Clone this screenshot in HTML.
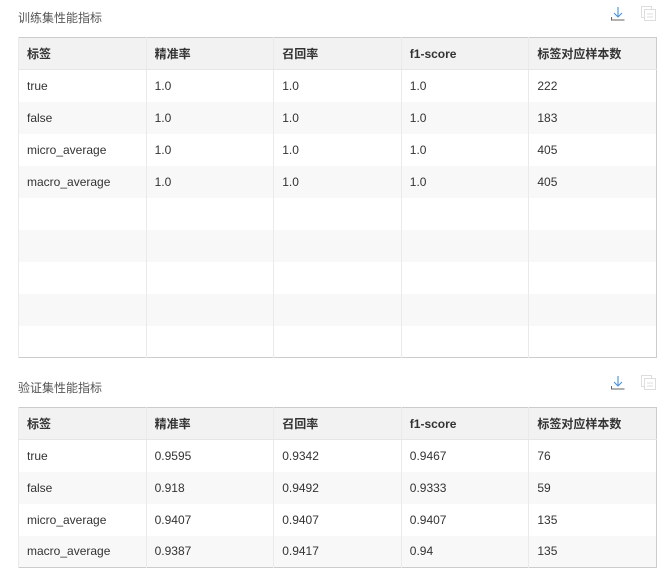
<!DOCTYPE html>
<html><head><meta charset="utf-8"><style>
*{margin:0;padding:0;box-sizing:border-box}
body{width:664px;height:536px;overflow:hidden;background:#fff;font-family:"Liberation Sans","Noto Sans CJK SC",sans-serif;font-size:12px;color:#333;position:relative}
.t{position:absolute;left:18px;font-size:12px;color:#555}
.ic{position:absolute}
table{position:absolute;left:18px;width:639px;border-collapse:collapse;border:1px solid #ccc;table-layout:fixed}
td,th{height:32px;border-left:1px solid #eaeaea;padding-left:8px;text-align:left;font-weight:normal;white-space:nowrap}
th{background:#f2f2f2;font-weight:bold;color:#333;border-bottom:1px solid #e6e6e6}
tr:nth-child(odd) td{background:#f8f8f8}
tr:nth-child(even) td{background:#fff}
</style></head><body>
<div class="t" style="top:9px">训练集性能指标</div>
<svg class="ic" style="left:611px;top:6px" width="14" height="15" viewBox="0 0 14 15"><path d="M7 1v10M3 7l4 4 4-4" stroke="#4a90d9" fill="none" stroke-width="1.1"/><path d="M0.5 11v3h13" stroke="#666" fill="none" stroke-width="1.1"/></svg>
<svg class="ic" style="left:640px;top:5px" width="17" height="17" viewBox="0 0 17 17"><rect x="1.5" y="1.5" width="10" height="11" fill="none" stroke="#ddd"/><rect x="4.5" y="4.5" width="11" height="11" fill="#fff" stroke="#ddd"/><path d="M7 9h6M7 12h6" stroke="#ddd"/></svg>
<table style="top:37px">
<tr><th>标签</th><th>精准率</th><th>召回率</th><th>f1-score</th><th>标签对应样本数</th></tr>
<tr><td>true</td><td>1.0</td><td>1.0</td><td>1.0</td><td>222</td></tr>
<tr><td>false</td><td>1.0</td><td>1.0</td><td>1.0</td><td>183</td></tr>
<tr><td>micro_average</td><td>1.0</td><td>1.0</td><td>1.0</td><td>405</td></tr>
<tr><td>macro_average</td><td>1.0</td><td>1.0</td><td>1.0</td><td>405</td></tr>
<tr><td></td><td></td><td></td><td></td><td></td></tr>
<tr><td></td><td></td><td></td><td></td><td></td></tr>
<tr><td></td><td></td><td></td><td></td><td></td></tr>
<tr><td></td><td></td><td></td><td></td><td></td></tr>
<tr><td></td><td></td><td></td><td></td><td></td></tr>
</table>
<div class="t" style="top:379px">验证集性能指标</div>
<svg class="ic" style="left:611px;top:375px" width="14" height="15" viewBox="0 0 14 15"><path d="M7 1v10M3 7l4 4 4-4" stroke="#4a90d9" fill="none" stroke-width="1.1"/><path d="M0.5 11v3h13" stroke="#666" fill="none" stroke-width="1.1"/></svg>
<svg class="ic" style="left:640px;top:374px" width="17" height="17" viewBox="0 0 17 17"><rect x="1.5" y="1.5" width="10" height="11" fill="none" stroke="#ddd"/><rect x="4.5" y="4.5" width="11" height="11" fill="#fff" stroke="#ddd"/><path d="M7 9h6M7 12h6" stroke="#ddd"/></svg>
<table style="top:407px">
<tr><th>标签</th><th>精准率</th><th>召回率</th><th>f1-score</th><th>标签对应样本数</th></tr>
<tr><td>true</td><td>0.9595</td><td>0.9342</td><td>0.9467</td><td>76</td></tr>
<tr><td>false</td><td>0.918</td><td>0.9492</td><td>0.9333</td><td>59</td></tr>
<tr><td>micro_average</td><td>0.9407</td><td>0.9407</td><td>0.9407</td><td>135</td></tr>
<tr><td>macro_average</td><td>0.9387</td><td>0.9417</td><td>0.94</td><td>135</td></tr>
</table>
</body></html>
